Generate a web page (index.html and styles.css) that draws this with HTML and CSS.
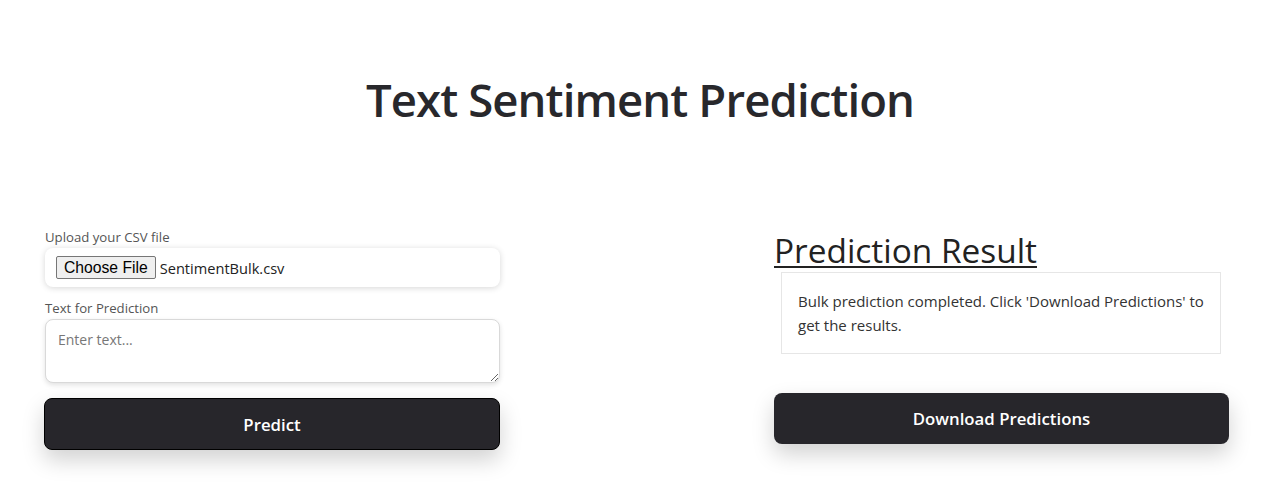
FILE: index.html
```html
<!DOCTYPE html>
<html lang="en">
<head>
<meta charset="utf-8">
<title>Text Sentiment Prediction</title>
<link rel="stylesheet" href="styles.css">
</head>
<body>
<main class="page">
  <h1 class="title">Text Sentiment Prediction</h1>
  <div class="columns">
    <form class="form-col">
      <label class="field-label" for="csv">Upload your CSV file</label>
      <div class="file-box">
        <span class="file-btn">Choose File</span>
        <span class="file-name">SentimentBulk.csv</span>
      </div>
      <label class="field-label" for="txt">Text for Prediction</label>
      <textarea id="txt" class="text-input" placeholder="Enter text..."></textarea>
      <button type="button" class="btn predict-btn">Predict</button>
    </form>
    <section class="result-col">
      <h2 class="result-title">Prediction Result</h2>
      <div class="result-box">Bulk prediction completed. Click 'Download Predictions' to get the results.</div>
      <button type="button" class="btn download-btn">Download Predictions</button>
    </section>
  </div>
</main>
</body>
</html>
```
FILE: styles.css
```css
* { box-sizing: border-box; }
html, body { background: #ffffff; }
body {
  margin: 0;
  font-family: "Open Sans", "Noto Sans", sans-serif;
  color: #212529;
}
.page {
  padding: 67px 0 40px;
}
.title {
  margin: 0;
  text-align: center;
  font-size: 45.5px;
  font-weight: 600;
  line-height: 64px;
  color: #28282c;
  letter-spacing: -0.9px;
}
.columns {
  display: grid;
  grid-template-columns: 456px 455px;
  column-gap: 274px;
  padding: 97px 50px 0 44px;
  align-items: start;
}
.form-col {
  display: flex;
  flex-direction: column;
  margin: 0;
}
.field-label {
  font-size: 13.2px;
  line-height: 18px;
  color: #555;
  padding-left: 1px;
  margin-bottom: 2px;
}
.file-box {
  display: flex;
  align-items: center;
  height: 39px;
  margin: 0 0 12px 1px;
  padding: 0 11px;
  border-radius: 8px;
  background: #fff;
  box-shadow: 0 1px 6px rgba(0, 0, 0, 0.16);
}
.file-btn {
  font-family: "Liberation Sans", Arial, sans-serif;
  font-size: 15.7px;
  line-height: 21px;
  color: #000;
  background: #efefef;
  border: 1px solid #767676;
  border-radius: 2px;
  padding: 0 7px;
  margin-right: 4px;
}
.file-name {
  font-size: 14.6px;
  color: #222;
}
.text-input {
  height: 64px;
  margin: 0 0 15px 1px;
  padding: 10px 12px;
  border: 1px solid #d9d9d9;
  border-radius: 8px;
  font-family: inherit;
  font-size: 14px;
  resize: vertical;
  box-shadow: 0 2px 5px rgba(0, 0, 0, 0.12);
}
.text-input::placeholder { color: #777; }
.btn {
  display: block;
  width: 100%;
  font-family: inherit;
  font-weight: 600;
  font-size: 16.8px;
  color: #fff;
  background: #27262b;
  border-radius: 8px;
  cursor: pointer;
  box-shadow: 0 10px 22px rgba(0, 0, 0, 0.18);
}
.predict-btn {
  height: 52px;
  border: 1px solid #000;
}
.result-title {
  margin: 0;
  font-size: 33.4px;
  font-weight: 400;
  line-height: 44px;
  text-decoration: underline;
  text-decoration-thickness: 2px;
  text-underline-offset: 3px;
  color: #222;
}
.result-box {
  margin: 0 8px 39px 7px;
  padding: 16px 16px;
  border: 1px solid #e6e6e6;
  font-size: 15px;
  line-height: 24px;
  color: #333;
}
.download-btn {
  height: 51px;
  border: none;
}
```
